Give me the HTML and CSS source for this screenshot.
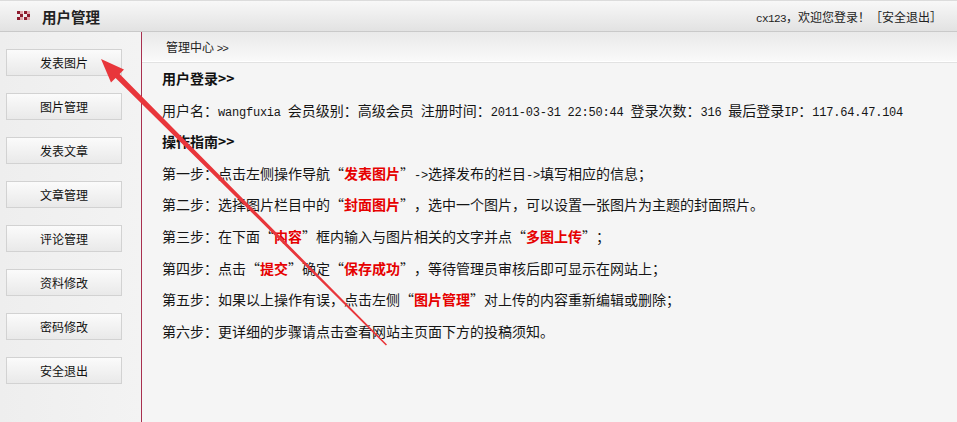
FILE: index.html
```html
<!DOCTYPE html>
<html lang="zh-CN">
<head>
<meta charset="utf-8">
<title>用户管理</title>
<link rel="stylesheet" href="styles.css">
</head>
<body>
<div class="page">
  <header class="topbar">
    <div class="title">
      <svg class="title-icon" width="13" height="10" viewBox="0 0 13 10">
        <rect x="0" y="0" width="3" height="3" fill="#8e1b2e"/>
        <rect x="3" y="3" width="3" height="3" fill="#8e1b2e"/>
        <rect x="0" y="6" width="3" height="3" fill="#8e1b2e"/>
        <rect x="3" y="0" width="3" height="3" fill="#e3a9b0"/>
        <rect x="3" y="6" width="3" height="3" fill="#e3a9b0"/>
        <rect x="7" y="0" width="3" height="3" fill="#8e1b2e"/>
        <rect x="10" y="3" width="3" height="3" fill="#8e1b2e"/>
        <rect x="7" y="6" width="3" height="3" fill="#8e1b2e"/>
        <rect x="10" y="0" width="3" height="3" fill="#e3a9b0"/>
        <rect x="10" y="6" width="3" height="3" fill="#e3a9b0"/>
      </svg>
      <span>用户管理</span>
    </div>
    <div class="welcome"><span class="en-s">cx123</span>，欢迎您登录！［安全退出］</div>
  </header>
  <div class="main">
    <nav class="sidebar">
      <a class="nav-btn">发表图片</a>
      <a class="nav-btn">图片管理</a>
      <a class="nav-btn">发表文章</a>
      <a class="nav-btn">文章管理</a>
      <a class="nav-btn">评论管理</a>
      <a class="nav-btn">资料修改</a>
      <a class="nav-btn">密码修改</a>
      <a class="nav-btn">安全退出</a>
    </nav>
    <section class="content">
      <div class="crumb">管理中心 <span class="gt">&gt;&gt;</span></div>
      <div class="body">
        <p class="heading">用户登录&gt;&gt;</p>
        <p>用户名：<span class="en">wangfuxia </span>会员级别：高级会员<span class="en"> </span>注册时间：<span class="en">2011-03-31 22:50:44 </span>登录次数：<span class="en">316 </span>最后登录<span class="en">IP</span>：<span class="en">117.64.47.104</span></p>
        <p class="heading">操作指南&gt;&gt;</p>
        <p>第一步：点击左侧操作导航<span class="q">“</span><b class="hl">发表图片</b><span class="q">”</span><span class="en">-&gt;</span>选择发布的栏目<span class="en">-&gt;</span>填写相应的信息；</p>
        <p>第二步：选择图片栏目中的<span class="q">“</span><b class="hl">封面图片</b><span class="q">”</span>，选中一个图片，可以设置一张图片为主题的封面照片。</p>
        <p>第三步：在下面<span class="q">“</span><b class="hl">内容</b><span class="q">”</span>框内输入与图片相关的文字并点<span class="q">“</span><b class="hl">多图上传</b><span class="q">”</span>；</p>
        <p>第四步：点击<span class="q">“</span><b class="hl">提交</b><span class="q">”</span>确定<span class="q">“</span><b class="hl">保存成功</b><span class="q">”</span>，等待管理员审核后即可显示在网站上；</p>
        <p>第五步：如果以上操作有误，点击左侧<span class="q">“</span><b class="hl">图片管理</b><span class="q">”</span>对上传的内容重新编辑或删除；</p>
        <p>第六步：更详细的步骤请点击查看网站主页面下方的投稿须知。</p>
      </div>
    </section>
  </div>
  <svg class="annot" width="957" height="422" viewBox="0 0 957 422">
    <polygon fill="#e8363b" points="101,59 124,69.5 119.6,73.9 387,344.6 385.9,345.4 115.6,77.9 111,82.5"/>
  </svg>
</div>
</body>
</html>
```

FILE: styles.css
```css
* { box-sizing: border-box; }
html, body {
  margin: 0;
  padding: 0;
}
body {
  font-family: "Noto Sans CJK SC", "Noto Sans", sans-serif;
  color: #151515;
  background: #f4f4f4;
}
.page {
  position: relative;
  width: 957px;
  height: 422px;
  overflow: hidden;
  display: flex;
  flex-direction: column;
}
.topbar {
  height: 32px;
  flex: none;
  display: flex;
  align-items: center;
  justify-content: space-between;
  background: linear-gradient(#f8f8f8, #e2e2e2);
  border-top: 1px solid #dcdcdc;
  border-bottom: 1px solid #c9c9c9;
  padding: 0 15px 0 17px;
}
.title {
  display: flex;
  align-items: center;
  gap: 12px;
  font-size: 14.5px;
  font-weight: 700;
  color: #222;
}
.title-icon { display: block; }
.welcome {
  font-size: 12px;
  color: #222;
}
.en-s {
  font-family: "Liberation Mono", monospace;
  font-size: 11px;
  letter-spacing: -0.6px;
}
.main {
  flex: 1;
  display: flex;
  min-height: 0;
}
.sidebar {
  width: 142px;
  flex: none;
  border-right: 1px solid #a8304f;
  background: linear-gradient(90deg, #eeeeee, #f3f3f3);
  display: flex;
  flex-direction: column;
  gap: 17px;
  padding: 17px 0 0 6px;
}
.nav-btn {
  display: block;
  width: 116px;
  height: 27px;
  line-height: 25px;
  text-align: center;
  font-size: 12px;
  color: #111;
  border: 1px solid #d2d2d2;
  background: linear-gradient(#fbfbfb, #e9e9e9);
  text-decoration: none;
}
.content {
  flex: 1;
  display: flex;
  flex-direction: column;
  background: #f5f5f5;
}
.crumb {
  height: 31px;
  flex: none;
  line-height: 29px;
  padding-left: 24px;
  font-size: 12px;
  color: #222;
  background: linear-gradient(#e9e9e9, #fafafa);
  border-bottom: 1px solid #e2e2e2;
  box-shadow: inset 0 -1px 0 #ffffff;
}
.crumb .gt {
  font-family: "Liberation Mono", monospace;
  font-size: 11px;
  letter-spacing: -1px;
}
.body {
  padding: 0 20px;
  font-size: 14px;
  line-height: 31.6px;
}
.body p {
  margin: 0;
  height: 31.6px;
  white-space: nowrap;
}
.heading {
  font-weight: 700;
  color: #111;
}
.en {
  font-family: "Liberation Mono", monospace;
  font-size: 12px;
  letter-spacing: -0.22px;
  line-height: 1;
}
.hl {
  color: #e60000;
  font-weight: 700;
  line-height: 1;
}
.q {
  display: inline-block;
  width: 14px;
  text-align: center;
  line-height: 1;
}
.annot {
  position: absolute;
  left: 0;
  top: 0;
  pointer-events: none;
}
```
